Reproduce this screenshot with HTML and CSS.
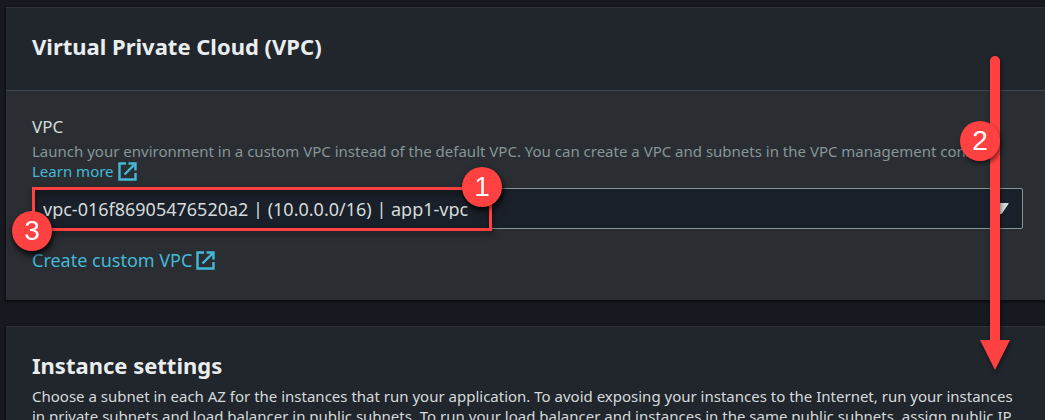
FILE: index.html
```html
<!DOCTYPE html>
<html lang="en">
<head>
<meta charset="utf-8">
<meta name="viewport" content="width=device-width, initial-scale=1">
<title>Network configuration</title>
<link rel="stylesheet" href="styles.css">
</head>
<body>
<svg class="sprite" aria-hidden="true">
  <symbol id="external" viewBox="0 0 19 19">
    <path d="M8 1.500H1.500V17.500H17.500V11" fill="none" stroke="currentColor" stroke-width="2.400"/>
    <path d="M6.500 12.500L16 3M10.500 1.500H17.500V8.500" fill="none" stroke="currentColor" stroke-width="2.400"/>
  </symbol>
</svg>
<main class="page">
  <section class="panel">
    <header class="panel-header">
      <h2 class="panel-title">Virtual Private Cloud (VPC)</h2>
    </header>
    <div class="panel-body">
      <label class="field-label" for="vpc">VPC</label>
      <p class="field-hint">Launch your environment in a custom VPC instead of the default VPC. You can create a VPC and subnets in the VPC management console.<br>
        <a class="link" href="#learn">Learn more <svg class="icon"><use href="#external"/></svg></a></p>
      <div class="select-box">
        <select class="select" id="vpc">
          <option>vpc-016f86905476520a2 | (10.0.0.0/16) | app1-vpc</option>
        </select>
        <svg class="caret" viewBox="0 0 18 12" aria-hidden="true"><path d="M1 0H17Q18 0 17.500 1L11 10.500Q9 12 7 10.500L.5 1Q0 0 1 0Z" fill="#d5dbdb"/></svg>
        <div class="highlight">
          <span class="badge badge-end">1</span>
          <span class="badge badge-start">3</span>
        </div>
      </div>
      <a class="link link-create" href="#create">Create custom VPC <svg class="icon"><use href="#external"/></svg></a>
    </div>
  </section>
  <section class="panel">
    <header class="panel-header panel-header-text">
      <h2 class="panel-title">Instance settings</h2>
      <p class="panel-text">Choose a subnet in each AZ for the instances that run your application. To avoid exposing your instances to the Internet, run your instances<br>in private subnets and load balancer in public subnets. To run your load balancer and instances in the same public subnets, assign public IP</p>
    </header>
  </section>
  <div class="arrow">
    <svg class="arrow-shape" width="30" height="314" viewBox="0 0 30 314" aria-hidden="true"><path d="M10 5A5 5 0 0 1 20 5V284H30L15 314L0 284H10Z" fill="#ff4141"/></svg>
    <span class="badge badge-arrow">2</span>
  </div>
</main>
</body>
</html>
```
FILE: styles.css
```css
* {
  box-sizing: border-box;
}

body {
  margin: 0;
  height: 100vh;
  overflow: hidden;
  background: #16191f;
  color: #d5dbdb;
  font: 15px/20px "Noto Sans", "Open Sans", sans-serif;
}

.sprite {
  position: absolute;
  width: 0;
  height: 0;
}

.page {
  position: relative;
  display: flex;
  flex-direction: column;
  gap: 26px;
  padding: 7px 0 0 6px;
}

.panel {
  border-top: 1px solid #2f3337;
  background: #2a2e33;
  box-shadow: 0 1px 2px 1px rgba(0, 0, 0, 0.5);
}

.panel-header {
  padding: 23px 22px 29px 26px;
  border-bottom: 1px solid #414750;
  background: #21252c;
}

.panel-header-text {
  border-bottom: 0;
}

.panel-title {
  margin: 0;
  color: #eaeded;
  font-size: 22px;
  line-height: 30px;
  font-weight: 700;
}

.panel-text {
  margin: 6px 0 0;
  white-space: nowrap;
}

.panel-body {
  padding: 24px 22px 28px 26px;
}

.field-label {
  display: block;
  margin-bottom: 2px;
  font-size: 17px;
  line-height: 24px;
}

.field-hint {
  margin: 0 0 7px;
  color: #879596;
  white-space: nowrap;
}

.link {
  display: flex;
  align-items: center;
  gap: 4px;
  width: max-content;
  color: #44b9d6;
  text-decoration: none;
}

.link-create {
  margin-top: 19px;
  font-size: 18px;
  line-height: 24px;
}

.icon {
  width: 19px;
  height: 19px;
}

.select-box {
  position: relative;
}

.select {
  display: block;
  width: 100%;
  height: 41px;
  padding: 0 40px 0 10px;
  border: 1px solid #879596;
  border-radius: 2px;
  background: #1a2029;
  color: #d5dbdb;
  font: inherit;
  font-size: 18px;
  appearance: none;
}

.caret {
  position: absolute;
  top: 15px;
  right: 14px;
  width: 18px;
  height: 12px;
}

.highlight {
  position: absolute;
  top: -1px;
  left: 0;
  width: 460px;
  height: 44px;
  border: 3px solid #ff4141;
  filter: drop-shadow(1px 3px 3px rgba(0, 0, 0, 0.6));
  pointer-events: none;
}

.badge {
  position: absolute;
  display: flex;
  align-items: center;
  justify-content: center;
  width: 40px;
  height: 40px;
  border-radius: 50%;
  background: #ff4141;
  box-shadow: 1px 3px 4px rgba(0, 0, 0, 0.5);
  color: #fff;
  font: 28px/40px "Liberation Sans", Arial, sans-serif;
}

.badge-end {
  top: -23px;
  right: -13px;
}

.badge-start {
  bottom: -23px;
  left: -23px;
}

.arrow {
  position: absolute;
  top: 56px;
  right: 35px;
  pointer-events: none;
}

.arrow-shape {
  display: block;
  filter: drop-shadow(1px 2px 2px rgba(0, 0, 0, 0.5));
}

.badge-arrow {
  top: 65px;
  left: -20px;
}
```
